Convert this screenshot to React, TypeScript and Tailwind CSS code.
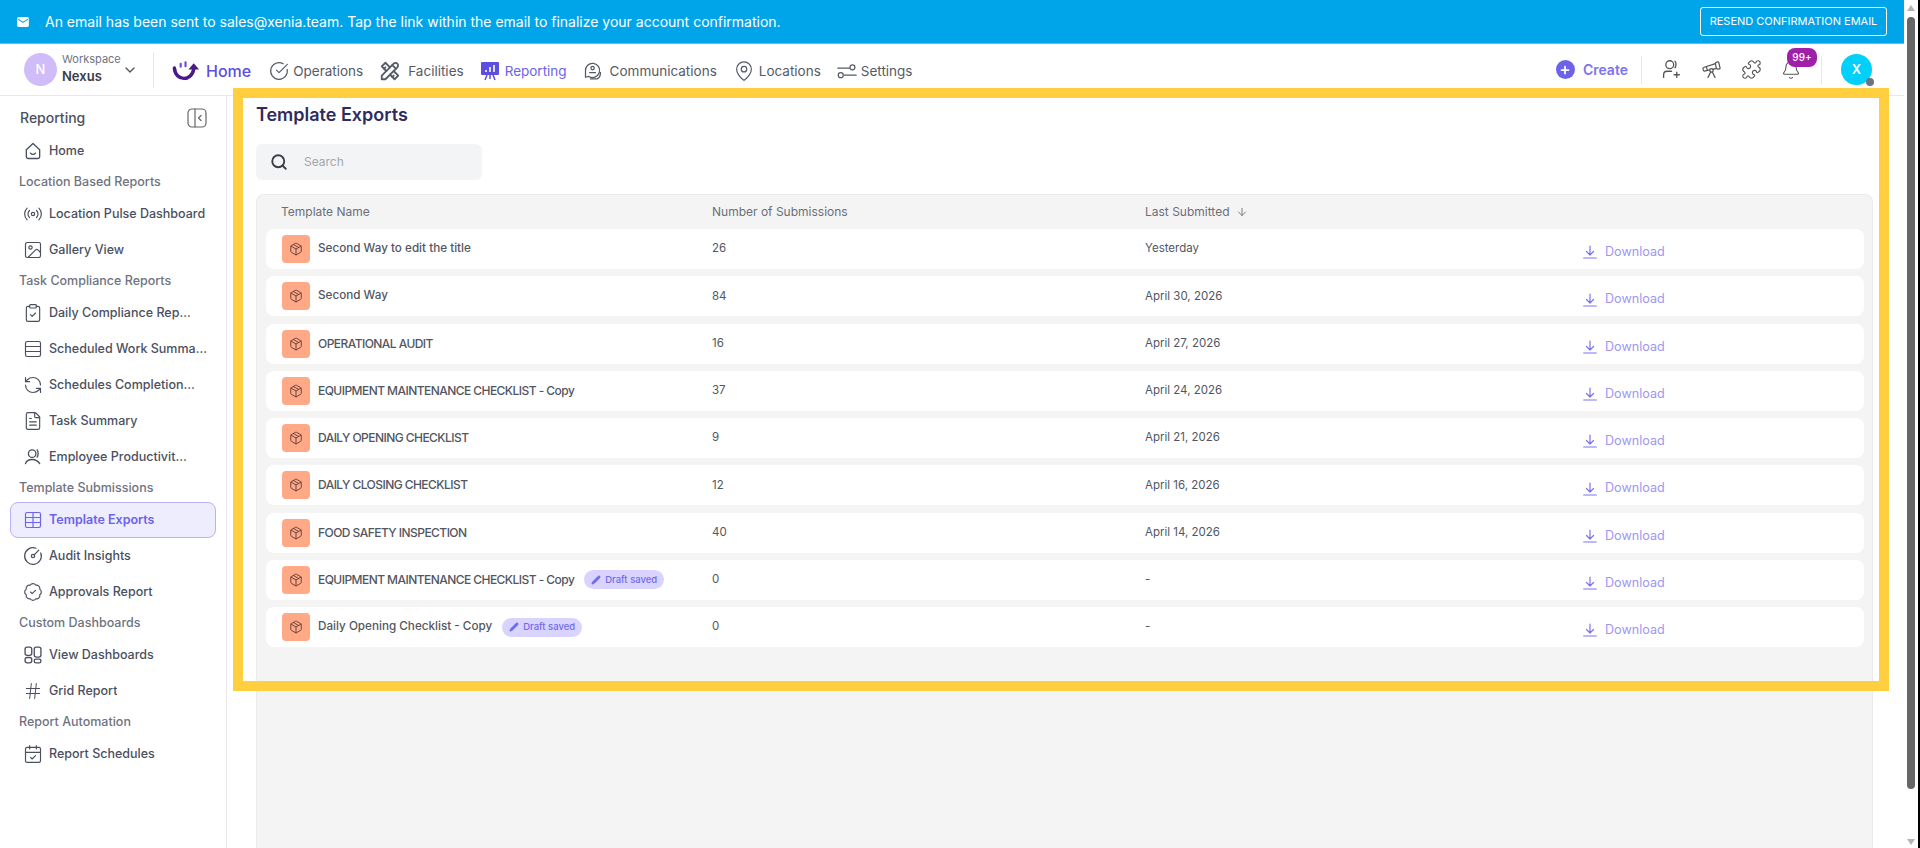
import type { ReactNode } from "react";
import {
  Bell,
  CalendarCheck,
  ChevronDown,
  CircleCheckBig,
  CircleGauge,
  ClipboardCheck,
  FileText,
  Hash,
  Image,
  MapPin,
  Package,
  Pencil,
  Plus,
  Puzzle,
  Radio,
  RefreshCcw,
  Rows3,
  Search,
  Table,
  Telescope,
  BadgeCheck,
  ArrowDown,
} from "lucide-react";
import { TbTools } from "react-icons/tb";

type Row = { name: string; count: string; last: string; caps?: boolean; draft?: boolean };

const ROWS: Row[] = [
  { name: "Second Way to edit the title", count: "26", last: "Yesterday" },
  { name: "Second Way", count: "84", last: "April 30, 2026" },
  { name: "OPERATIONAL AUDIT", count: "16", last: "April 27, 2026", caps: true },
  { name: "EQUIPMENT MAINTENANCE CHECKLIST - Copy", count: "37", last: "April 24, 2026", caps: true },
  { name: "DAILY OPENING CHECKLIST", count: "9", last: "April 21, 2026", caps: true },
  { name: "DAILY CLOSING CHECKLIST", count: "12", last: "April 16, 2026", caps: true },
  { name: "FOOD SAFETY INSPECTION", count: "40", last: "April 14, 2026", caps: true },
  { name: "EQUIPMENT MAINTENANCE CHECKLIST - Copy", count: "0", last: "-", caps: true, draft: true },
  { name: "Daily Opening Checklist - Copy", count: "0", last: "-", draft: true },
];

const svgProps = {
  viewBox: "0 0 24 24",
  fill: "none",
  stroke: "currentColor",
  strokeWidth: 1.6,
  strokeLinecap: "round" as const,
  strokeLinejoin: "round" as const,
};

function HomeSmile() {
  return (
    <svg {...svgProps} className="h-5 w-5">
      <path d="M4 10.5 12 3l8 7.500V19a2 2 0 0 1-2 2H6a2 2 0 0 1-2-2z" />
      <path d="M9 14.500c1.500 2 4.500 2 6 0" />
    </svg>
  );
}

function People() {
  return (
    <svg {...svgProps} className="h-5 w-5">
      <circle cx="11" cy="8" r="4.500" />
      <path d="M17 3.500c1.500 1.500 1.500 7 0 8.500" />
      <path d="M3 20c1-3.500 4.500-5 8-5s7 1.500 9 5" />
    </svg>
  );
}

function TwoCols() {
  return (
    <svg {...svgProps} className="h-5 w-5">
      <rect x="2.500" y="2.500" width="8" height="10" rx="2.500" />
      <rect x="13.500" y="2.500" width="8" height="12" rx="2.500" />
      <rect x="2.500" y="15" width="8" height="6.500" rx="2.500" />
      <rect x="13.500" y="17" width="8" height="4.500" rx="2" />
    </svg>
  );
}

function DownloadIcon() {
  return (
    <svg viewBox="0 0 14 14" fill="none" stroke="#7c74ef" strokeWidth="1.200" strokeLinecap="round" strokeLinejoin="round" className="h-[14px] w-[14px]">
      <path d="M7 1v8.500M3.500 6.500 7 10l3.500-3.500M0.700 13h12.600" />
    </svg>
  );
}

function SideItem({ icon, label, active }: { icon: ReactNode; label: string; active?: boolean }) {
  return (
    <div
      className={
        active
          ? "mx-[10px] flex h-9 items-center gap-[6px] rounded-lg border border-[#b8b3f6] bg-[#eeedfd] pl-[12px] font-semibold text-[#6c63e8]"
          : "mx-[10px] flex h-9 items-center gap-[6px] pl-[13px] font-medium text-[#4b5060]"
      }
    >
      <span className="flex w-[20px] shrink-0 justify-center">{icon}</span>
      <span className="truncate">{label}</span>
    </div>
  );
}

function SideLabel({ children }: { children: ReactNode }) {
  return <div className="flex h-[27px] items-center pl-[19px] font-medium text-[#6f7380]">{children}</div>;
}

function NavLink({ icon, label, active }: { icon: ReactNode; label: string; active?: boolean }) {
  return (
    <div className={active ? "flex items-center gap-[4px] text-[#6c63e8]" : "flex items-center gap-[4px] text-[#565a66]"}>
      {icon}
      <span>{label}</span>
    </div>
  );
}

function Sidebar() {
  const i = "h-5 w-5";
  return (
    <aside className="w-[227px] shrink-0 border-r border-[#e8e8ec] text-[12.500px]">
      <div className="flex h-[37px] items-center justify-between pl-[20px] pr-[19px] pt-[6px]">
        <span className="text-[14px] font-medium text-[#4b5060]">Reporting</span>
        <svg viewBox="0 0 20 20" fill="none" stroke="#666" strokeWidth="1.200" strokeLinecap="round" strokeLinejoin="round" className="h-5 w-5">
          <rect x="1" y="1" width="18" height="18" rx="4" />
          <path d="M8 1v18M14 7.500 11.500 10l2.500 2.500" />
        </svg>
      </div>
      <SideItem icon={<HomeSmile />} label="Home" />
      <SideLabel>Location Based Reports</SideLabel>
      <SideItem icon={<Radio className={i} strokeWidth={1.4} />} label="Location Pulse Dashboard" />
      <SideItem icon={<Image className={i} strokeWidth={1.4} />} label="Gallery View" />
      <SideLabel>Task Compliance Reports</SideLabel>
      <SideItem icon={<ClipboardCheck className={i} strokeWidth={1.4} />} label="Daily Compliance Rep..." />
      <SideItem icon={<Rows3 className={i} strokeWidth={1.4} />} label="Scheduled Work Summa..." />
      <SideItem icon={<RefreshCcw className={i} strokeWidth={1.4} />} label="Schedules Completion..." />
      <SideItem icon={<FileText className={i} strokeWidth={1.4} />} label="Task Summary" />
      <SideItem icon={<People />} label="Employee Productivit..." />
      <SideLabel>Template Submissions</SideLabel>
      <SideItem active icon={<Table className={i} strokeWidth={1.4} />} label="Template Exports" />
      <SideItem icon={<CircleGauge className={i} strokeWidth={1.5} />} label="Audit Insights" />
      <SideItem icon={<BadgeCheck className={i} strokeWidth={1.4} />} label="Approvals Report" />
      <SideLabel>Custom Dashboards</SideLabel>
      <SideItem icon={<TwoCols />} label="View Dashboards" />
      <SideItem icon={<Hash className={i} strokeWidth={1.2} />} label="Grid Report" />
      <SideLabel>Report Automation</SideLabel>
      <SideItem icon={<CalendarCheck className={i} strokeWidth={1.4} />} label="Report Schedules" />
    </aside>
  );
}

function Header() {
  return (
    <header className="flex h-[52px] shrink-0 items-center justify-between border-b border-[#e8e8ec] pl-[24px] pr-[32px]">
      <div className="flex items-center text-[13.500px]">
        <div className="flex h-[33px] w-[33px] items-center justify-center rounded-full bg-[#cfbcf8] text-[13px] font-medium text-white">N</div>
        <div className="-mt-[3px] ml-[5px] w-[60px] leading-[17px]">
          <div className="text-[11px] text-[#6f7380]">Workspace</div>
          <div className="text-[13px] font-semibold text-[#3a3d48]">Nexus</div>
        </div>
        <ChevronDown className="h-4 w-4 text-[#555]" />
        <div className="ml-[15px] mr-[18px] h-[36px] w-px bg-[#e8e8ec]" />
        <svg viewBox="0 0 30 22" fill="none" className="mr-[5px] mt-[2px] h-[22px] w-[29px]">
          <path d="M2.500 8c1 14 18 14 20 1" stroke="#4a1a8c" strokeWidth="3.600" strokeLinecap="round" />
          <path d="M22.500 3l5.500 6.500h-11z" fill="#4a1a8c" />
          <path d="M9 3.500v3M14 2v4" stroke="#5b4ee0" strokeWidth="2.200" strokeLinecap="round" />
        </svg>
        <span className="mr-[18px] mt-[2px] text-[16px] font-medium text-[#5b4ee0]">Home</span>
        <div className="flex items-center gap-[16px] pt-[3px]">
          <NavLink icon={<CircleCheckBig className="h-5 w-5" strokeWidth={1.4} />} label="Operations" />
          <NavLink icon={<TbTools className="mr-[3px] h-[22px] w-[22px]" />} label="Facilities" />
          <NavLink
            active
            label="Reporting"
            icon={
              <svg viewBox="0 0 20 20" className="mr-px h-5 w-5">
                <rect x="1" y="1" width="18" height="13" rx="1" fill="#5b4ee0" />
                <path d="M6 11V9M10 11V6M14 11V4" stroke="#fff" strokeWidth="1.600" />
                <path d="M7 14l-2 5M13 14l2 5M10 14v4" stroke="#5b4ee0" strokeWidth="1.500" />
              </svg>
            }
          />
          <NavLink
            label="Communications"
            icon={
              <svg {...svgProps} strokeWidth={1.5} className="mr-[3px] h-5 w-5">
                <path d="M3 12a8.500 8.500 0 1 1 4 6.500l-4 1z" />
                <circle cx="11.500" cy="8.500" r="2" />
                <path d="M8 14h7" />
                <path d="M21 13.500c0 4.500-1.500 7-4 8H9" />
              </svg>
            }
          />
          <NavLink icon={<MapPin className="h-[22px] w-[22px]" strokeWidth={1.3} />} label="Locations" />
          <NavLink
            label="Settings"
            icon={
              <svg {...svgProps} strokeWidth={1.5} className="h-5 w-5">
                <path d="M1 8.500h14M9 17h14" />
                <circle cx="18.500" cy="7.500" r="3" />
                <circle cx="4.500" cy="17" r="3" />
              </svg>
            }
          />
        </div>
      </div>
      <div className="flex items-center">
        <span className="flex h-[19px] w-[19px] items-center justify-center rounded-full bg-[#6c63e8] text-white">
          <Plus className="h-3 w-3" strokeWidth={3.500} />
        </span>
        <span className="ml-[8px] text-[14px] font-semibold text-[#7c74ef]">Create</span>
        <div className="ml-[13px] mr-[19px] h-[28px] w-px bg-[#e8e8ec]" />
        <div className="flex items-center gap-[19px] text-[#555]">
          <svg {...svgProps} strokeWidth={1.500} className="h-[21px] w-[21px]">
            <circle cx="10" cy="6.500" r="4.500" />
            <path d="M16 2.500c1.500 1.200 1.500 6 0 7.500" />
            <path d="M3 21v-3c0-2.500 2-4 4-4h5" />
            <path d="M18 15v6M15 18h6" />
          </svg>
          <Telescope className="h-[21px] w-[21px]" strokeWidth={1.4} />
          <Puzzle className="h-[21px] w-[21px]" strokeWidth={1.3} />
          <div className="relative">
            <Bell className="h-5 w-5" strokeWidth={1.3} />
            <span className="absolute -top-[12px] left-[6px] flex h-[19px] w-[30px] items-center justify-center rounded-[8px] bg-[#a01fa8] text-[10px] font-medium text-white">99+</span>
          </div>
        </div>
        <div className="ml-[20px] mr-[19px] h-[28px] w-px bg-[#e8e8ec]" />
        <div className="relative flex h-[31px] w-[31px] items-center justify-center rounded-full bg-[#00d0fa] text-[13px] font-semibold text-white">
          X
          <span className="absolute -bottom-[1px] -right-[2px] h-2 w-2 rounded-full bg-[#6b7280]" />
        </div>
      </div>
    </header>
  );
}

function TableRow({ row }: { row: Row }) {
  return (
    <div className="grid h-[40px] grid-cols-[430px_433px_438px_1fr] items-center rounded-lg bg-white pl-[16px] text-[11.500px] text-[#52565f]">
      <div className="flex items-center">
        <span className="flex h-[28px] w-[28px] items-center justify-center rounded-[4px] bg-[#ffa987] text-[#5a3a33]">
          <Package className="h-[14px] w-[14px]" strokeWidth={1.5} />
        </span>
        <span className={row.caps ? "ml-2 text-[12px] font-medium tracking-[-0.55px]" : "ml-2 text-[11.700px] font-medium"}>{row.name}</span>
        {row.draft && (
          <span className="ml-[10px] flex h-[19px] w-[80px] items-center justify-center gap-1 rounded-full bg-[#d8d4ff] text-[9.500px] font-medium text-[#7069ea]">
            <Pencil className="h-[10px] w-[10px]" fill="currentColor" strokeWidth={1.5} />
            Draft saved
          </span>
        )}
      </div>
      <div>{row.count}</div>
      <div>{row.last}</div>
      <div className="flex items-center gap-[8px] pt-[7px] text-[12.600px] text-[#9d97f3]">
        <DownloadIcon />
        <span>Download</span>
      </div>
    </div>
  );
}

export default function App() {
  return (
    <div className="relative flex h-[848px] w-[1920px] overflow-hidden bg-white font-['Inter',sans-serif]">
      <div className="flex w-[1904px] shrink-0 flex-col">
        <div className="flex h-[44px] shrink-0 items-center justify-between border-b border-[#4fc3f4] bg-[#00a5e9] pl-[17px] pr-[17px] text-white">
          <div className="flex items-center text-[14px]">
            <svg viewBox="0 0 14 12" className="mr-[16px] h-[10px] w-[12px]">
              <rect width="14" height="12" rx="2" fill="#fff" />
              <path d="M1 2.500 7 6.500l6-4" fill="none" stroke="#00a5e9" strokeWidth="1.300" />
            </svg>
            An email has been sent to sales@xenia.team. Tap the link within the email to finalize your account confirmation.
          </div>
          <div className="flex h-[29px] w-[187px] items-center justify-center rounded-[3px] border border-white text-[11px]">
            RESEND CONFIRMATION EMAIL
          </div>
        </div>
        <Header />
        <div className="flex min-h-0 flex-1">
          <Sidebar />
          <main className="flex min-w-0 flex-1 flex-col pl-[29px] pr-[31px]">
            <h1 className="flex h-[36px] shrink-0 items-center text-[18px] font-semibold text-[#2f2b5e]">Template Exports</h1>
            <div className="mt-[12px] flex h-[36px] w-[226px] shrink-0 items-center gap-[16px] rounded-md bg-[#f3f4f6] pl-[14px] text-[12px] text-[#a3a6ad]">
              <Search className="h-[18px] w-[18px] text-[#3c3f46]" strokeWidth={2.500} />
              Search
            </div>
            <section className="mt-[14px] flex-1 rounded-t-lg border border-b-0 border-[#ebebee] bg-[#f4f4f5] pl-[9px] pr-[8px]">
              <div className="grid h-[34px] grid-cols-[430px_433px_438px_1fr] items-center pb-px pl-[15px] text-[12px] text-[#6b6f78]">
                <div>Template Name</div>
                <div className="pl-px">Number of Submissions</div>
                <div className="flex items-center gap-[6px] pl-px">
                  Last Submitted
                  <ArrowDown className="h-3 w-3" strokeWidth={1.8} />
                </div>
                <div />
              </div>
              <div className="flex flex-col gap-[7.250px]">
                {ROWS.map((row, idx) => (
                  <TableRow key={idx} row={row} />
                ))}
              </div>
            </section>
          </main>
        </div>
      </div>

      {/* scrollbar strip */}
      <div className="flex w-[14px] shrink-0 flex-col items-center">
        <span className="mt-[5px] h-0 w-0 border-x-[4px] border-b-[6px] border-x-transparent border-b-[#b5b5b5]" />
        <span className="mt-[6px] h-[772px] w-[8px] rounded-full bg-[#666]" />
        <span className="mt-auto mb-[3px] h-0 w-0 border-x-[4px] border-t-[6px] border-x-transparent border-t-[#b5b5b5]" />
      </div>
      <div className="w-[2px] shrink-0 bg-black" />

      {/* yellow annotation frame over the content */}
      <div className="pointer-events-none absolute left-[233px] top-[88px] h-[603px] w-[1656px] border-[10px] border-[#ffcf40]" />
    </div>
  );
}
